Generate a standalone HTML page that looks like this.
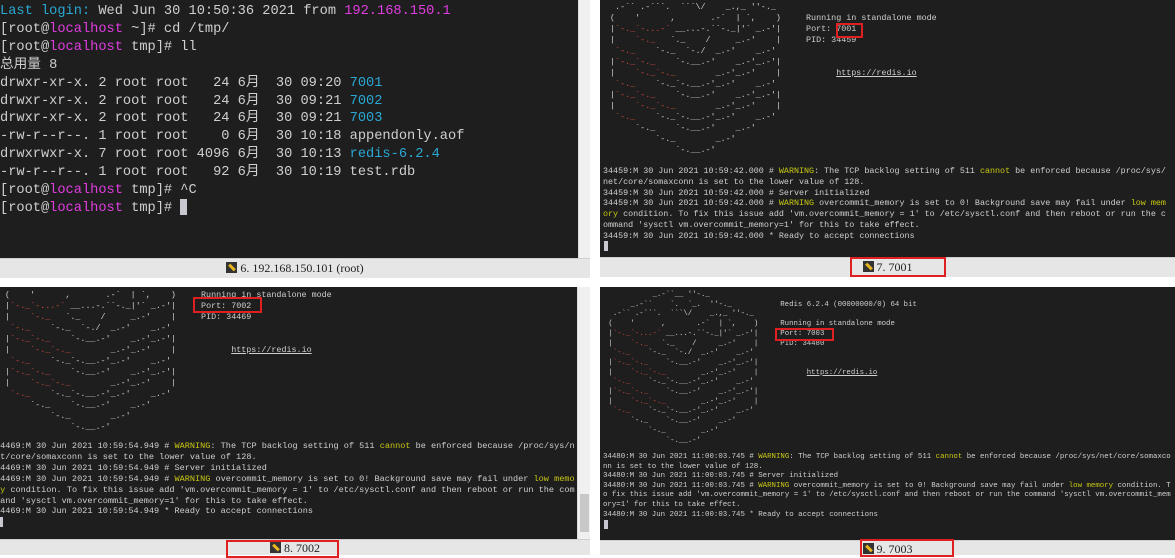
<!DOCTYPE html>
<html><head><meta charset="utf-8"><style>
*{margin:0;padding:0;box-sizing:border-box}
body{width:1175px;height:555px;background:#fff;position:relative;overflow:hidden;font-family:"Liberation Mono","Noto Sans CJK SC",monospace}
.t{position:absolute;background:#1e1e1e;overflow:hidden}
pre{position:absolute;font-family:"Liberation Mono","Noto Sans CJK SC",monospace;color:#cfcfcf;white-space:pre;margin:0}
.c{color:#2aa8d4}.m{color:#e03ce0}.y{color:#c8c814}.r{color:#d04a3a}.u{text-decoration:underline}
.sb{position:absolute;background:#e6e6e6;border-top:1px solid #cfcfcf;font-family:"Liberation Serif",serif;font-size:12px;color:#222;text-align:center;line-height:19px}
.ic{display:inline-block;width:11px;height:11px;background:#333;vertical-align:-1px;margin-right:3px;position:relative}
.ic:after{content:"";position:absolute;left:2px;top:4px;width:8px;height:3px;background:#e8b420;transform:rotate(45deg)}
.box{position:absolute;border:2px solid #e02020}
.scroll{position:absolute;background:#f0f0f0;border-left:1px solid #ddd}
</style></head><body>

<!-- top-left -->
<div class="t" style="left:0;top:0;width:578px;height:258px">
<pre style="left:0;top:3px;font-size:13.67px;line-height:17.9px"><span class="c">Last login:</span> Wed Jun 30 10:50:36 2021 from <span class="m">192.168.150.1</span>
[root@<span class="m">localhost</span> ~]# cd /tmp/
[root@<span class="m">localhost</span> tmp]# ll
总用量 8
drwxr-xr-x. 2 root root   24 6月  30 09:20 <span class="c">7001</span>
drwxr-xr-x. 2 root root   24 6月  30 09:21 <span class="c">7002</span>
drwxr-xr-x. 2 root root   24 6月  30 09:21 <span class="c">7003</span>
-rw-r--r--. 1 root root    0 6月  30 10:18 appendonly.aof
drwxrwxr-x. 7 root root 4096 6月  30 10:13 <span class="c">redis-6.2.4</span>
-rw-r--r--. 1 root root   92 6月  30 10:19 test.rdb
[root@<span class="m">localhost</span> tmp]# ^C
[root@<span class="m">localhost</span> tmp]# </pre>
<div style="position:absolute;left:180px;top:199px;width:7px;height:16px;background:#c8c8d0"></div>
</div>
<div class="scroll" style="left:578px;top:0;width:12px;height:258px"></div>
<div class="sb" style="left:0;top:258px;width:590px;height:20px"><span class="ic"></span>6. 192.168.150.101 (root)</div>

<!-- top-right -->
<div class="t" style="left:600px;top:0;width:575px;height:257px">
<pre style="left:5px;top:2px;font-size:8.4px;line-height:11px">  .-&#96;&#96; .-&#96;&#96;&#96;.  &#96;&#96;&#96;\/    _.,_ ''-._
 (    '      ,       .-&#96;  | &#96;,    )     Running in standalone mode
 |<span class="r">&#96;-._&#96;-...-&#96;</span> __...-.&#96;&#96;-._|'&#96; _.-'|     Port: 7001
 |    <span class="r">&#96;-._</span>   &#96;._    /     _.-'    |     PID: 34459
  <span class="r">&#96;-._</span>    &#96;-._  &#96;-./  _.-'    _.-'
 |<span class="r">&#96;-._&#96;-._</span>    &#96;-.__.-'    _.-'_.-'|
 |    <span class="r">&#96;-._&#96;-._</span>        _.-'_.-'    |           <span class="u">https://redis.io</span>
  <span class="r">&#96;-._</span>    &#96;-._&#96;-.__.-'_.-'    _.-'
 |<span class="r">&#96;-._&#96;-._</span>    &#96;-.__.-'    _.-'_.-'|
 |    <span class="r">&#96;-._&#96;-._</span>        _.-'_.-'    |
  <span class="r">&#96;-._</span>    &#96;-._&#96;-.__.-'_.-'    _.-'
      &#96;-._    &#96;-.__.-'    _.-'
          &#96;-._        _.-'
              &#96;-.__.-'</pre>
<pre style="left:3px;top:166px;font-size:8.4px;line-height:10.8px">34459:M 30 Jun 2021 10:59:42.000 # <span class="y">WARNING</span>: The TCP backlog setting of 511 <span class="y">cannot</span> be enforced because /proc/sys/
net/core/somaxconn is set to the lower value of 128.
34459:M 30 Jun 2021 10:59:42.000 # Server initialized
34459:M 30 Jun 2021 10:59:42.000 # <span class="y">WARNING</span> overcommit_memory is set to 0! Background save may fail under <span class="y">low mem</span>
<span class="y">ory</span> condition. To fix this issue add 'vm.overcommit_memory = 1' to /etc/sysctl.conf and then reboot or run the c
ommand 'sysctl vm.overcommit_memory=1' for this to take effect.
34459:M 30 Jun 2021 10:59:42.000 * Ready to accept connections</pre>
<div style="position:absolute;left:4px;top:241px;width:4px;height:10px;background:#c8c8d0"></div>
</div>
<div class="sb" style="left:600px;top:257px;width:575px;height:20px"><span class="ic"></span>7. 7001</div>
<div class="box" style="left:836px;top:23px;width:27px;height:15px"></div>
<div class="box" style="left:850px;top:257px;width:96px;height:20px"></div>

<!-- bottom-left -->
<div class="t" style="left:0;top:287px;width:577px;height:252px">
<pre style="left:0;top:3px;font-size:8.4px;line-height:11px"> (    '      ,       .-&#96;  | &#96;,    )     Running in standalone mode
 |<span class="r">&#96;-._&#96;-...-&#96;</span> __...-.&#96;&#96;-._|'&#96; _.-'|     Port: 7002
 |    <span class="r">&#96;-._</span>   &#96;._    /     _.-'    |     PID: 34469
  <span class="r">&#96;-._</span>    &#96;-._  &#96;-./  _.-'    _.-'
 |<span class="r">&#96;-._&#96;-._</span>    &#96;-.__.-'    _.-'_.-'|
 |    <span class="r">&#96;-._&#96;-._</span>        _.-'_.-'    |           <span class="u">https://redis.io</span>
  <span class="r">&#96;-._</span>    &#96;-._&#96;-.__.-'_.-'    _.-'
 |<span class="r">&#96;-._&#96;-._</span>    &#96;-.__.-'    _.-'_.-'|
 |    <span class="r">&#96;-._&#96;-._</span>        _.-'_.-'    |
  <span class="r">&#96;-._</span>    &#96;-._&#96;-.__.-'_.-'    _.-'
      &#96;-._    &#96;-.__.-'    _.-'
          &#96;-._        _.-'
              &#96;-.__.-'</pre>
<pre style="left:-5px;top:154px;font-size:8.55px;line-height:10.9px">34469:M 30 Jun 2021 10:59:54.949 # <span class="y">WARNING</span>: The TCP backlog setting of 511 <span class="y">cannot</span> be enforced because /proc/sys/n
et/core/somaxconn is set to the lower value of 128.
34469:M 30 Jun 2021 10:59:54.949 # Server initialized
34469:M 30 Jun 2021 10:59:54.949 # <span class="y">WARNING</span> overcommit_memory is set to 0! Background save may fail under <span class="y">low memo</span>
<span class="y">ry</span> condition. To fix this issue add 'vm.overcommit_memory = 1' to /etc/sysctl.conf and then reboot or run the com
mand 'sysctl vm.overcommit_memory=1' for this to take effect.
34469:M 30 Jun 2021 10:59:54.949 * Ready to accept connections</pre>
<div style="position:absolute;left:0;top:230px;width:3px;height:10px;background:#c8c8d0"></div>
</div>
<div class="scroll" style="left:577px;top:287px;width:13px;height:252px"><div style="position:absolute;left:2px;top:207px;width:9px;height:38px;background:#c8c8c8"></div></div>
<div class="sb" style="left:0;top:539px;width:590px;height:16px;line-height:17px"><span class="ic"></span>8. 7002</div>
<div class="box" style="left:193px;top:297px;width:69px;height:16px"></div>
<div class="box" style="left:226px;top:540px;width:113px;height:18px"></div>

<!-- bottom-right -->
<div class="t" style="left:600px;top:287px;width:575px;height:253px">
<pre style="left:4px;top:4px;font-size:7.35px;line-height:9.7px">           _.-&#96;&#96;__ ''-._
      _.-&#96;&#96;    &#96;.  &#96;_.  ''-._           Redis 6.2.4 (00000000/0) 64 bit
  .-&#96;&#96; .-&#96;&#96;&#96;.  &#96;&#96;&#96;\/    _.,_ ''-._
 (    '      ,       .-&#96;  | &#96;,    )     Running in standalone mode
 |<span class="r">&#96;-._&#96;-...-&#96;</span> __...-.&#96;&#96;-._|'&#96; _.-'|     Port: 7003
 |    <span class="r">&#96;-._</span>   &#96;._    /     _.-'    |     PID: 34480
  <span class="r">&#96;-._</span>    &#96;-._  &#96;-./  _.-'    _.-'
 |<span class="r">&#96;-._&#96;-._</span>    &#96;-.__.-'    _.-'_.-'|
 |    <span class="r">&#96;-._&#96;-._</span>        _.-'_.-'    |           <span class="u">https://redis.io</span>
  <span class="r">&#96;-._</span>    &#96;-._&#96;-.__.-'_.-'    _.-'
 |<span class="r">&#96;-._&#96;-._</span>    &#96;-.__.-'    _.-'_.-'|
 |    <span class="r">&#96;-._&#96;-._</span>        _.-'_.-'    |
  <span class="r">&#96;-._</span>    &#96;-._&#96;-.__.-'_.-'    _.-'
      &#96;-._    &#96;-.__.-'    _.-'
          &#96;-._        _.-'
              &#96;-.__.-'</pre>
<pre style="left:3px;top:166px;font-size:7.4px;line-height:9.6px">34480:M 30 Jun 2021 11:00:03.745 # <span class="y">WARNING</span>: The TCP backlog setting of 511 <span class="y">cannot</span> be enforced because /proc/sys/net/core/somaxco
nn is set to the lower value of 128.
34480:M 30 Jun 2021 11:00:03.745 # Server initialized
34480:M 30 Jun 2021 11:00:03.745 # <span class="y">WARNING</span> overcommit_memory is set to 0! Background save may fail under <span class="y">low memory</span> condition. T
o fix this issue add 'vm.overcommit_memory = 1' to /etc/sysctl.conf and then reboot or run the command 'sysctl vm.overcommit_mem
ory=1' for this to take effect.
34480:M 30 Jun 2021 11:00:03.745 * Ready to accept connections</pre>
<div style="position:absolute;left:4px;top:233px;width:4px;height:9px;background:#c8c8d0"></div>
</div>
<div class="sb" style="left:600px;top:540px;width:575px;height:15px;line-height:17px"><span class="ic"></span>9. 7003</div>
<div class="box" style="left:775px;top:328px;width:59px;height:13px"></div>
<div class="box" style="left:860px;top:539px;width:94px;height:18px"></div>

</body></html>
